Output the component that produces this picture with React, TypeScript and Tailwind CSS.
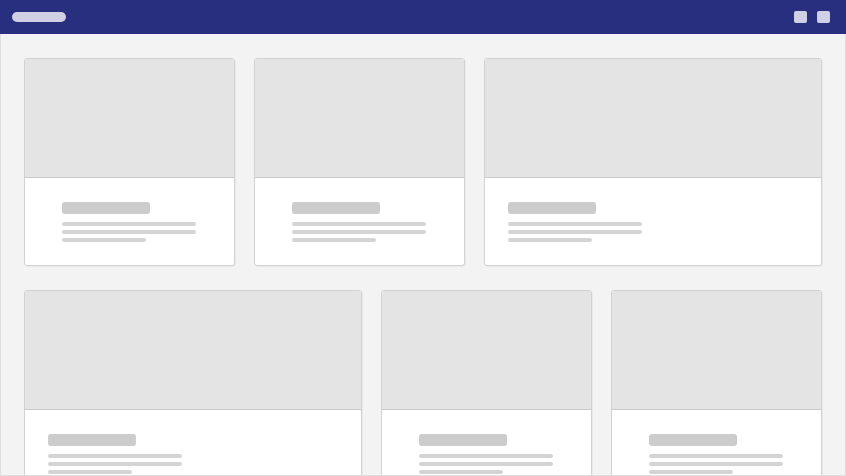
const rows: { wide: boolean }[][] = [
  [{ wide: false }, { wide: false }, { wide: true }],
  [{ wide: true }, { wide: false }, { wide: false }],
];

function Card({ wide }: { wide: boolean }) {
  return (
    <div className="flex flex-col overflow-hidden rounded-[3px] border border-[#d2d2d2] bg-white shadow-[1px_1px_0_rgba(0,0,0,0.04)]">
      {/* image placeholder */}
      <div className="h-[119px] border-b border-[#c8c8c8] bg-[#e4e4e4]" />
      {/* text skeleton */}
      <div className={wide ? "pt-6 pb-[23px] pl-[23px]" : "pt-6 pb-[23px] pl-[37px]"}>
        <div className="flex w-[134px] flex-col">
          <div className="h-3 w-[88px] rounded-[3px] bg-[#cccccc]" />
          <div className="mt-2 h-1 w-full rounded-full bg-[#d4d4d4]" />
          <div className="mt-1 h-1 w-full rounded-full bg-[#d4d4d4]" />
          <div className="mt-1 h-1 w-[84px] rounded-full bg-[#d4d4d4]" />
        </div>
      </div>
    </div>
  );
}

export default function App() {
  return (
    <div className="flex h-[476px] w-[846px] flex-col overflow-hidden bg-[#f3f3f3]">
      {/* ── HEADER ── */}
      <div className="flex h-[34px] shrink-0 items-center justify-between bg-[#272f7e] pl-3 pr-4">
        <div className="h-[10px] w-[54px] rounded-full bg-[#cfd0e4]" />
        <div className="flex gap-[10px]">
          <div className="h-3 w-[13px] rounded-[2px] bg-[#cfd0e4]" />
          <div className="h-3 w-[13px] rounded-[2px] bg-[#cfd0e4]" />
        </div>
      </div>

      {/* ── GRID ── */}
      <div className="flex flex-1 flex-col gap-6 overflow-hidden border-x border-b border-[#dedede] pt-6 pl-[23px]">
        <div className="grid w-[798px] grid-cols-[211px_211px_338px] gap-[19px]">
          {rows[0].map((c, i) => (
            <Card key={i} wide={c.wide} />
          ))}
        </div>
        <div className="grid w-[798px] grid-cols-[338px_211px_211px] gap-[19px]">
          {rows[1].map((c, i) => (
            <Card key={i} wide={c.wide} />
          ))}
        </div>
      </div>
    </div>
  );
}
